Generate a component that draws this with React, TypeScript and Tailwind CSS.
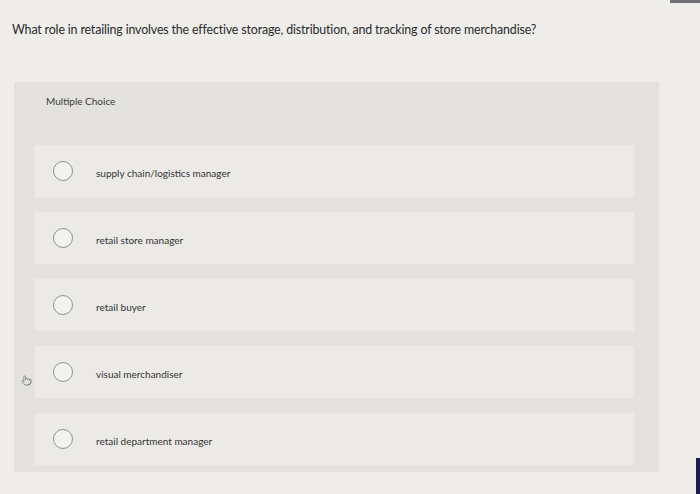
import React from "react";
import { Pointer } from "lucide-react";

const options = [
  "supply chain/logistics manager",
  "retail store manager",
  "retail buyer",
  "visual merchandiser",
  "retail department manager",
];

export default function App() {
  return (
    <div
      className="relative w-[700px] h-[494px] overflow-hidden bg-[#eeedea] text-[#2e2e2e]"
      style={{ fontFamily: "Lato, 'Open Sans', sans-serif" }}
    >
      <div className="absolute right-0 top-0 h-[3px] w-[30px] bg-[#6f7078]" />
      <div className="absolute right-0 bottom-0 h-[36px] w-[4px] bg-[#1c1d52]" />
      <div className="pl-[12px] pt-[21px] text-[12.4px] leading-[18px] tracking-[-0.15px] text-[#2a2a2a]">
        What role in retailing involves the effective storage, distribution, and tracking of store merchandise?
      </div>
      <div className="ml-[14px] mt-[43px] w-[645px] h-[390px] bg-[#e3e2df] flex flex-col">
        <div className="pl-[32px] pt-[12px] h-[63px] text-[10px] leading-[14px] text-[#3a3a3a]">
          Multiple Choice
        </div>
        <div className="flex flex-col gap-[15px] pl-[21px] pr-[25px]">
          {options.map((o, i) => (
            <div key={o} className="relative h-[52px] bg-[#ebeae7] flex items-center">
              {i === 3 && (
                <Pointer
                  className="absolute left-[-14px] top-[29px] text-[#777]"
                  size={11}
                  strokeWidth={1.6}
                />
              )}
              <div className="ml-[18px] w-[20px] h-[20px] rounded-full border-[1.5px] border-[#909090] bg-[#f3f2ef]" />
              <div className="ml-[23px] text-[10px] leading-[14px] text-[#333] pt-[3px]">{o}</div>
            </div>
          ))}
        </div>
      </div>
    </div>
  );
}
